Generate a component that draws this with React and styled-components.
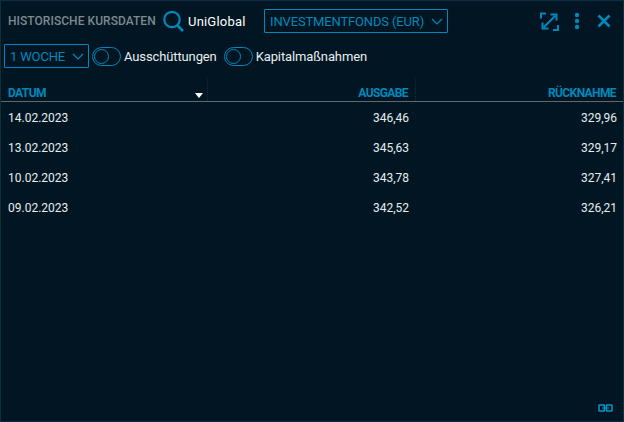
import React from "react";
import styled, { createGlobalStyle } from "styled-components";

const Global = createGlobalStyle`
  html, body { margin: 0; padding: 0; background: #011723; }
  body { font-family: Roboto, "Noto Sans", sans-serif; }
`;
const Win = styled.div`
  box-sizing: border-box; width: 624px; height: 422px; background: #011622;
  border: 1px solid #0b3040; position: relative; padding: 7px 0 0 0; overflow: hidden;
`;
const TopBar = styled.div`
  display: flex; align-items: center; height: 26px; padding-left: 7px;
`;
const Title = styled.div`
  font-size: 12px; font-weight: 500; color: #7d8990; white-space: nowrap; width: 155px; letter-spacing: 0.05px;
`;
const SearchName = styled.div`
  font-size: 13px; color: #fff; margin-left: 4px; width: 76px; letter-spacing: 0.2px;
`;
const Select = styled.div`
  box-sizing: border-box; display: flex; align-items: center; justify-content: space-between;
  height: 24px; width: ${p => p.$w}px; padding: 0 4px 0 5px; border: 1px solid #0088bb; border-radius: 1px;
  color: #0088bb; font-size: 13px; white-space: nowrap; letter-spacing: -0.15px;
`;
const Actions = styled.div`
  margin-left: auto; display: flex; align-items: center; gap: 15px; padding-right: 12px;
`;
const Dots = styled.svg`
  margin-right: 2px;
`;
const FilterBar = styled.div`
  display: flex; align-items: center; padding: 10px 0 0 3px; height: 24px;
`;
const ToggleWrap = styled.div`
  display: flex; align-items: center; margin-left: ${p => p.$ml}px;
  color: #e8eef1; font-size: 13px; letter-spacing: -0.12px;
`;
const Track = styled.div`
  box-sizing: border-box; position: relative; width: 29px; height: 19px; border: 1px solid #0088bb;
  border-radius: 10px; margin-right: 3px;
  &::after { content: ""; position: absolute; left: 1px; top: 1px; width: 15px; height: 15px; box-sizing: border-box;
    border: 1px solid #0088bb; border-radius: 50%; }
`;
const Table = styled.div` margin-top: 8px; `;
const Grid = styled.div`
  display: grid; grid-template-columns: 207px 208px 1fr;
`;
const HeadRow = styled(Grid)`
  height: 25px; border-bottom: 1px solid #5c6a72; box-sizing: content-box;
`;
const HeadCell = styled.div`
  position: relative; display: flex; align-items: flex-end; justify-content: ${p => p.$pr ? "flex-end" : "flex-start"};
  padding: 0 ${p => p.$pr || 0}px 1px 7px; font-size: 12px; font-weight: 700; color: #0088bb; letter-spacing: -0.6px;
  ${p => p.$sep ? `&::after { content: ""; position: absolute; right: 0; top: 2px; bottom: 0; border-right: 1px dotted #0b3040; }` : ""}
`;
const SortMark = styled.span`
  position: absolute; right: 5px; bottom: 3px; width: 0; height: 0;
  border-left: 4.5px solid transparent; border-right: 4.5px solid transparent; border-top: 5px solid #fff;
`;
const Row = styled(Grid)` height: 30px; align-items: center; padding-top: 1px; margin-bottom: -1px; `;
const Cell = styled.div`
  font-size: 12px; color: #e6edf0; padding: 0 ${p => p.$pr || 0}px 0 7px;
  text-align: ${p => p.$pr ? "right" : "left"};
`;
const LinkIcon = styled.svg`
  position: absolute; right: 10px; bottom: 9px;
`;

const Chevron = () => (
  <svg width="12" height="7" viewBox="0 0 12 7" fill="none" stroke="#0088bb" strokeWidth="1.2">
    <path d="M1 1l5 5 5-5" />
  </svg>
);

const rows = [
  ["14.02.2023", "346,46", "329,96"],
  ["13.02.2023", "345,63", "329,17"],
  ["10.02.2023", "343,78", "327,41"],
  ["09.02.2023", "342,52", "326,21"],
];

export default function App() {
  return (
    <Win>
      <Global />
      <TopBar>
        <Title>HISTORISCHE KURSDATEN</Title>
        <svg width="21" height="22" viewBox="0 0 21 22" fill="none" stroke="#0088bb">
          <circle cx="9" cy="9.5" r="7.7" strokeWidth="2.200" />
          <path d="M14.5 15.5L20 21" strokeWidth="2.600" />
        </svg>
        <SearchName>UniGlobal</SearchName>
        <Select $w={184}>INVESTMENTFONDS (EUR)<Chevron /></Select>
        <Actions>
          <svg width="19" height="19" viewBox="0 0 19 19" fill="none" stroke="#0088bb" strokeWidth="2">
            <path d="M1 6.500V1.500h5M13 18h5v-5M4 15L15 4M10.500 2.500h6v6M2.500 10.500v6h6" />
          </svg>
          <Dots width="6" height="18" viewBox="0 0 6 18" fill="#0088bb">
            <circle cx="3" cy="3" r="2.200" /><circle cx="3" cy="9" r="2.200" /><circle cx="3" cy="15" r="2.200" />
          </Dots>
          <svg width="14" height="14" viewBox="0 0 14 14" fill="none" stroke="#0088bb" strokeWidth="2.600">
            <path d="M1.500 1.500l11 11M12.500 1.500l-11 11" />
          </svg>
        </Actions>
      </TopBar>
      <FilterBar>
        <Select $w={85}>1 WOCHE<Chevron /></Select>
        <ToggleWrap $ml={3}><Track />Ausschüttungen</ToggleWrap>
        <ToggleWrap $ml={7}><Track />Kapitalmaßnahmen</ToggleWrap>
      </FilterBar>
      <Table>
        <HeadRow>
          <HeadCell $sep>DATUM<SortMark /></HeadCell>
          <HeadCell $pr={8} $sep>AUSGABE</HeadCell>
          <HeadCell $pr={7}>RÜCKNAHME</HeadCell>
        </HeadRow>
        {rows.map(r => (
          <Row key={r[0]}>
            <Cell>{r[0]}</Cell>
            <Cell $pr={7}>{r[1]}</Cell>
            <Cell $pr={6}>{r[2]}</Cell>
          </Row>
        ))}
      </Table>
      <LinkIcon width="15" height="8" viewBox="0 0 15 8" fill="none" stroke="#0098cc" strokeWidth="1.500">
        <rect x="1" y="1" width="5.500" height="6" rx="0.500" />
        <rect x="8.500" y="1" width="5.500" height="6" rx="0.500" />
        <path d="M4 4h7" strokeWidth="1" />
      </LinkIcon>
    </Win>
  );
}
